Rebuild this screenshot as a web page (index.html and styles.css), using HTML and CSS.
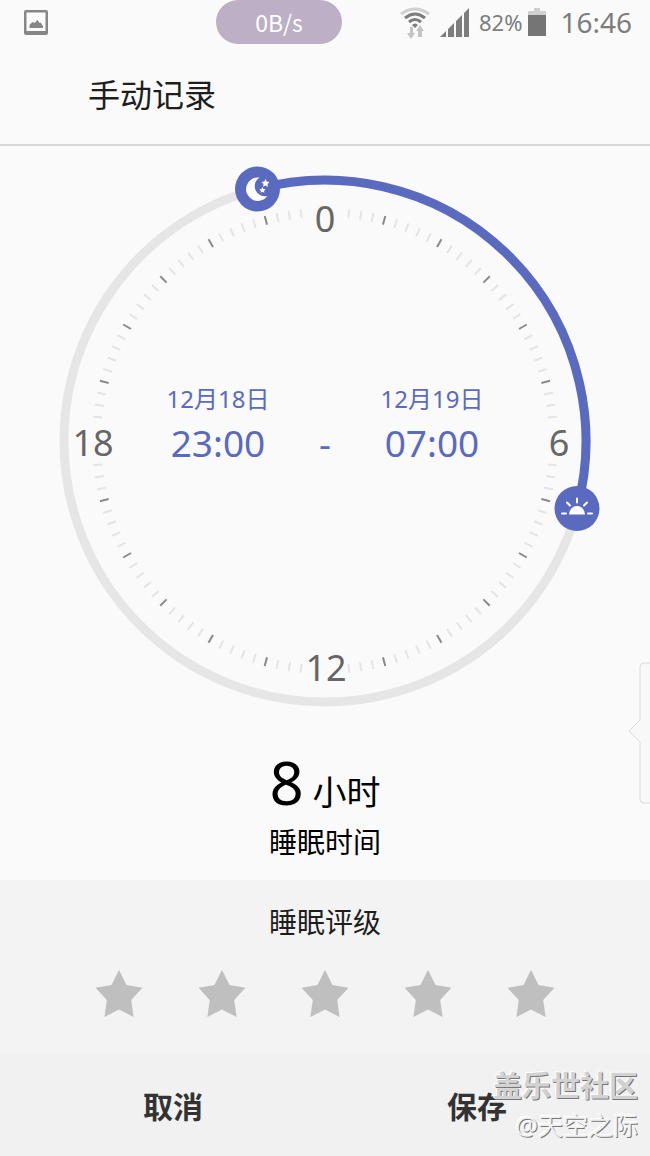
FILE: index.html
```html
<!DOCTYPE html>
<html lang="zh">
<head>
	<meta charset="UTF-8" />
	<meta name="viewport" content="width=device-width, initial-scale=1" />
	<title>手动记录</title>
	<link rel="stylesheet" href="styles.css">
</head>
<body>

<!-- 状态栏 -->
<div class="status-bar">
	<svg class="icon-picture" width="24" height="25" viewBox="0 0 24 25">
		<path fill="#868686" fill-rule="evenodd" d="M2 0h20a2 2 0 0 1 2 2v21a2 2 0 0 1-2 2H2a2 2 0 0 1-2-2V2a2 2 0 0 1 2-2zM2.500 2.500v18.500h19V2.500z"/>
		<path fill="#868686" d="M5.500 18v-3l3-3 2 1 3-3 2 3 1-.5 2.500 3.500v2z"/>
	</svg>
	<div class="speed">0B/s</div>
	<div class="status-right">
		<svg width="30" height="33" viewBox="0 0 30 33" fill="none">
			<path stroke="#d0d0d0" stroke-width="3" d="M1 8Q15-2 29 8"/>
			<g stroke="#7d7d7d" stroke-width="3">
				<path d="M5 12Q15 4 25 12"/>
				<path d="M9 16Q15 11 21 16"/>
			</g>
			<path fill="#7d7d7d" d="M12 19q3-3 6 0l-3 3z"/>
			<path fill="#c4c4c4" d="M10 21h3v6h2l-4 6-4-6h3zM18 31h4v-6h2l-4-6-4 6h2z"/>
		</svg>
		<svg class="icon-signal" width="29" height="29" viewBox="0 0 29 29" fill="#7d7d7d">
			<path d="M0 29l6-6v6zM8 21l6-6v14H8zM16 13l6-6v22h-6zM24 5l5-5v29h-5z"/>
		</svg>
		<span class="percent">82%</span>
		<svg class="icon-battery" width="18" height="28" viewBox="0 0 18 28">
			<path fill="#d0d0d0" d="M6 0h6v3h6v5H0V3h6z"/>
			<path fill="#757575" d="M0 7h18v21H0z"/>
		</svg>
		<span class="clock">16:46</span>
	</div>
</div>

<header class="title-bar">
	<h1>手动记录</h1>
</header>

<main>
	<!-- 24 小时表盘 -->
	<div class="dial">
		<svg viewBox="-283 -283 566 566">
			<circle class="ring" r="261"/>
			<path class="arc" d="M-67.5 -252.1A261 261 0 0 1 252.1 67.5"/>
			<g id="ticks"></g>
			<g class="numbers">
				<text x="0" y="-209">0</text>
				<text x="234" y="15">6</text>
				<text x="1" y="240">12</text>
				<text x="-232" y="15">18</text>
			</g>
			<g transform="translate(-67.500 -252)">
				<circle class="handle" r="22.500"/>
				<path fill="#fff" d="M2-11.500A11.800 11.800 0 1 0 10 7A10.200 10.200 0 0 1 2-11.500z"/>
				<path fill="#fff" d="M8-10l1.200 2.600 2.800.4-2 2 .4 2.800L8-3.500l-2.400 1.300.4-2.800-2-2 2.800-.4zM5-2l1 1.900 2.100.3-1.500 1.500.3 2.100L5 2.800l-1.900 1 .3-2.100L1.900.2 4-.1z"/>
			</g>
			<g transform="translate(252 67.500)">
				<circle class="handle" r="22.500"/>
				<path fill="#fff" d="M-8 6a8 8.500 0 0 1 16 0z"/>
				<path class="rays" d="M-15 5h4M11 5h4M-10-6l3 3M10-6l-3 3M0-10v4"/>
			</g>
		</svg>
		<div class="range">
			<div class="range-item">
				<div class="date">12月18日</div>
				<div class="time">23:00</div>
			</div>
			<div class="time dash">-</div>
			<div class="range-item">
				<div class="date">12月19日</div>
				<div class="time">07:00</div>
			</div>
		</div>
	</div>

	<div class="total">
		<div class="total-value"><span class="hours">8</span> 小时</div>
		<div class="caption">睡眠时间</div>
	</div>
</main>

<form class="bottom">
	<div class="rating">
		<div class="caption" id="ratingLabel">睡眠评级</div>
		<div class="stars" role="radiogroup" aria-labelledby="ratingLabel">
			<input type="radio" name="rating" value="1" aria-label="1 星">
			<input type="radio" name="rating" value="2" aria-label="2 星">
			<input type="radio" name="rating" value="3" aria-label="3 星">
			<input type="radio" name="rating" value="4" aria-label="4 星">
			<input type="radio" name="rating" value="5" aria-label="5 星">
		</div>
	</div>
	<div class="buttons">
		<button type="reset">取消</button>
		<button type="button">保存</button>
	</div>
</form>

<!-- 右侧边缘气泡 -->
<svg class="edge-bubble" width="22" height="142" viewBox="0 0 22 142">
	<path fill="#f8f8f8" stroke="#dcdcdc" d="M24 1H16a4 4 0 0 0-4 4v53L1 69l11 11v57a4 4 0 0 0 4 4h8"/>
</svg>

<!-- 水印 -->
<div class="watermark">
	<div class="site">盖乐世社区</div>
	<div class="user">@天空之际</div>
</div>

<script>
	// 每 3 度一个刻度，每 15 度一个深色刻度，数字两侧留空
	const ticks = document.getElementById('ticks');
	for (let deg = 0; deg < 360; deg += 3) {
		const rest = deg % 90;
		if (rest < 6 || rest > 84) continue;
		const line = document.createElementNS('http://www.w3.org/2000/svg', 'line');
		line.setAttribute('y1', -233);
		line.setAttribute('y2', -224);
		line.setAttribute('transform', 'rotate(' + deg + ')');
		line.setAttribute('class', deg % 15 === 0 ? 'tick major' : 'tick');
		ticks.appendChild(line);
	}
</script>

</body>
</html>
```
FILE: styles.css
```css
* {
	box-sizing: border-box;
}

body {
	position: relative;
	display: flex;
	flex-direction: column;
	min-height: 100vh;
	margin: 0;
	background-color: #fafafa;
	color: #000;
	font-family: "Noto Sans", "Noto Sans CJK SC", sans-serif;
	overflow-x: hidden;
}

svg {
	display: block;
}

/* 状态栏 */
.status-bar {
	display: flex;
	align-items: center;
	height: 44px;
	padding: 0 18px 0 24px;
	color: #7d7d7d;
}

.speed {
	width: 126px;
	height: 44px;
	margin-left: 168px;
	border-radius: 22px;
	background-color: #bdb0c6;
	color: #fff;
	font-family: "Noto Sans CJK SC", sans-serif;
	font-size: 23px;
	line-height: 44px;
	text-align: center;
}

.status-right {
	display: flex;
	align-items: center;
	margin-left: auto;
}

.icon-signal {
	margin: 0 10px;
}

.percent {
	font-size: 22px;
}

.icon-battery {
	margin: 0 14px 0 6px;
}

.clock {
	font-size: 28px;
}

.title-bar {
	height: 102px;
	padding: 27px 88px 0;
	border-bottom: 2px solid #d8d8d8;
}

.title-bar h1 {
	margin: 0;
	color: #1e1e1e;
	font-size: 32px;
	font-weight: 400;
	line-height: 48px;
}

main {
	flex: 1;
	padding: 12px 0 18px;
}

/* 表盘 */
.dial {
	position: relative;
	width: 88%;
	max-width: 566px;
	margin: 0 auto;
}

.ring,
.arc {
	fill: none;
	stroke: #e6e6e6;
	stroke-width: 9;
}

.arc {
	stroke: #5a6abf;
}

.handle {
	fill: #5a6abf;
}

.rays {
	stroke: #fff;
	stroke-width: 2;
	stroke-linecap: round;
}

.tick {
	stroke: #e4e4e4;
	stroke-width: 2;
}

.tick.major {
	stroke: #8a8a8a;
}

.numbers {
	fill: #666;
	font-size: 36px;
	text-anchor: middle;
}

.range {
	position: absolute;
	inset: 0;
	display: flex;
	align-items: center;
	justify-content: center;
	padding-bottom: 36px;
	color: #5a6abf;
	text-align: center;
}

.range-item {
	width: 140px;
}

.date {
	font-size: 24px;
	line-height: 40px;
}

.time {
	font-size: 37px;
	line-height: 48px;
}

.dash {
	width: 74px;
	padding-top: 40px;
}

.total {
	text-align: center;
}

.total-value {
	height: 98px;
	font-size: 34px;
	line-height: 116px;
}

.hours {
	font-size: 60px;
}

.caption {
	font-size: 28px;
	line-height: 40px;
}

/* 底部 */
.rating {
	height: 174px;
	padding-top: 22px;
	background-color: #f3f3f3;
	color: #1e1e1e;
	text-align: center;
}

.stars {
	display: flex;
	justify-content: center;
	gap: 56px;
	padding-top: 28px;
}

.stars input {
	appearance: none;
	width: 47px;
	height: 47px;
	margin: 0;
	background-color: #bfbfbf;
	clip-path: polygon(50% 0, 66% 32%, 100% 38%, 76% 64%, 81% 100%, 50% 84%, 19% 100%, 24% 64%, 0 38%, 34% 32%);
	cursor: pointer;
}

.stars input:checked {
	background-color: #5a6abf;
}

.buttons {
	display: flex;
	height: 102px;
	padding: 0 21px;
	background-color: #f1f1f1;
}

.buttons button {
	flex: 1;
	padding: 0;
	border: none;
	background: none;
	color: #333;
	font-family: inherit;
	font-size: 30px;
	font-weight: 700;
	cursor: pointer;
}

.edge-bubble {
	position: absolute;
	top: 662px;
	right: 0;
}

.watermark {
	position: absolute;
	right: 12px;
	bottom: 12px;
	color: #d2d2d2;
	text-align: right;
	text-shadow: 1px 1px 0 #777, -1px -1px 0 #fff;
	pointer-events: none;
}

.site {
	font-size: 29px;
	font-weight: 700;
	line-height: 40px;
}

.user {
	color: #f1f1f1;
	font-size: 25px;
	line-height: 38px;
}
```
